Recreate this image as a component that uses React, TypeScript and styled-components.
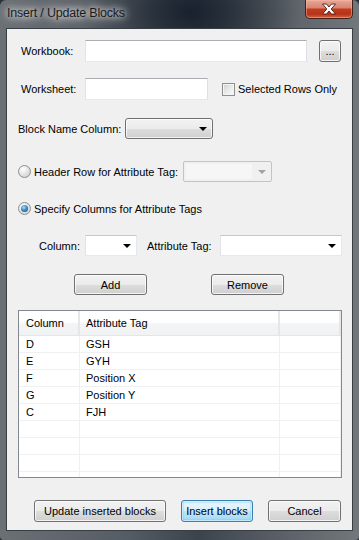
import styled, { createGlobalStyle, css } from 'styled-components';

const GlobalStyle = createGlobalStyle`
  html, body {
    margin: 0;
    padding: 0;
    background: #2b3138;
  }
  body {
    font-family: "Liberation Sans", Arial, sans-serif;
    font-size: 11px;
    color: #000;
  }
  * {
    box-sizing: border-box;
  }
`;

const Window = styled.div`
  width: 359px;
  height: 540px;
  display: flex;
  flex-direction: column;
  border-radius: 6px 6px 4px 4px;
  overflow: hidden;
  background:
    radial-gradient(ellipse 110px 70px at 190px 12px, rgba(22, 32, 44, 0.95), rgba(22, 32, 44, 0) 100%),
    linear-gradient(to right, #6b7075 0%, #565c63 35%, #3c434b 55%, #5d6268 80%, #72777c 100%);
`;

const TitleBar = styled.div`
  height: 28px;
  flex: none;
  display: flex;
  justify-content: space-between;
  align-items: flex-start;
  padding-left: 7px;
`;

const Title = styled.div`
  padding-top: 6px;
  font-size: 12.5px;
  letter-spacing: -0.2px;
  color: #1b1b1b;
  text-shadow:
    0 0 6px rgba(255, 255, 255, 0.9),
    0 0 10px rgba(255, 255, 255, 0.8),
    0 0 16px rgba(255, 255, 255, 0.6);
`;

const CloseButton = styled.div`
  width: 48px;
  height: 19px;
  margin-right: 6px;
  display: flex;
  align-items: center;
  justify-content: center;
  border: 1px solid #43201a;
  border-top: none;
  border-radius: 0 0 5px 5px;
  background: linear-gradient(to bottom, #e6a898 0%, #d98571 42%, #c43a1f 52%, #b5331a 78%, #d0643f 100%);
  box-shadow: inset 0 0 0 1px rgba(255, 190, 170, 0.45);
`;

const Client = styled.div`
  flex: 1;
  margin: 0 6px 9px 6px;
  border: 1px solid #383e45;
  background: #f0f0f0;
  display: flex;
  flex-direction: column;
  padding-top: 11px;
`;

const Row = styled.div<{ $top: number; $left?: number; $h?: number }>`
  display: flex;
  align-items: center;
  height: ${(p) => p.$h ?? 21}px;
  margin-top: ${(p) => p.$top}px;
  padding-left: ${(p) => p.$left ?? 0}px;
`;

const Label = styled.span<{ $w?: number; $ml?: number }>`
  flex: none;
  white-space: nowrap;
  ${(p) => p.$w !== undefined && css`width: ${p.$w}px;`}
  margin-left: ${(p) => p.$ml ?? 0}px;
`;

const TextBox = styled.div<{ $w: number }>`
  width: ${(p) => p.$w}px;
  height: 100%;
  flex: none;
  background: #fff;
  border: 1px solid;
  border-color: #abadb3 #dbdfe6 #e3e9ef #e2e3ea;
`;

const buttonFace = css`
  border: 1px solid #707070;
  border-radius: 3px;
  background: linear-gradient(to bottom, #f2f2f2 0%, #ebebeb 50%, #dddddd 51%, #cfcfcf 100%);
  box-shadow: inset 0 0 0 1px rgba(255, 255, 255, 0.75);
`;

const Button = styled.div<{ $w: number; $ml?: number; $focused?: boolean }>`
  flex: none;
  width: ${(p) => p.$w}px;
  height: 100%;
  margin-left: ${(p) => p.$ml ?? 0}px;
  display: flex;
  align-items: center;
  justify-content: center;
  white-space: nowrap;
  ${buttonFace}
  ${(p) =>
    p.$focused &&
    css`
      border-color: #3c7fb1;
      background: linear-gradient(to bottom, #eaf6fd 0%, #d9f0fc 50%, #bee6fd 51%, #a7d9f5 100%);
      box-shadow: inset 0 0 0 1px rgba(255, 255, 255, 0.6), inset 0 0 2px 1px #66c3f0;
    `}
`;

const Arrow = styled.span<{ $color?: string }>`
  width: 0;
  height: 0;
  border-left: 4px solid transparent;
  border-right: 4px solid transparent;
  border-top: 4px solid ${(p) => p.$color ?? '#000'};
`;

const Combo = styled.div<{ $w: number; $ml?: number; $variant: 'button' | 'white' | 'disabled' }>`
  flex: none;
  width: ${(p) => p.$w}px;
  height: 100%;
  margin-left: ${(p) => p.$ml ?? 0}px;
  display: flex;
  align-items: center;
  justify-content: flex-end;
  padding-right: 5px;
  ${(p) =>
    p.$variant === 'button'
      ? buttonFace
      : p.$variant === 'white'
      ? css`
          background: #fff;
          border: 1px solid;
          border-color: #c5c8ce #e3e9ef #e3e9ef #e2e3ea;
        `
      : css`
          border: 1px solid #c3c3c3;
          border-radius: 2px;
          background: #f0f0f0;
          padding: 2px 5px 2px 2px;
          justify-content: space-between;
        `}
`;

const DisabledField = styled.span`
  width: 66px;
  height: 100%;
  background: #f6f6f6;
`;

const CheckBox = styled.span<{ $ml?: number }>`
  flex: none;
  width: 13px;
  height: 13px;
  margin-left: ${(p) => p.$ml ?? 0}px;
  border: 1px solid #8e8f8f;
  background: linear-gradient(135deg, #cfcfcf 0%, #ececec 55%, #fbfbfb 100%);
  box-shadow: inset 0 0 0 1px #f4f4f4;
`;

const Radio = styled.span<{ $checked?: boolean }>`
  flex: none;
  position: relative;
  width: 13px;
  height: 13px;
  border-radius: 50%;
  border: 1px solid #8d8e8e;
  background: radial-gradient(circle at 35% 30%, #ffffff 0%, #e6e6e6 45%, #c8c8c8 100%);
  ${(p) =>
    p.$checked &&
    css`
      &::after {
        content: '';
        position: absolute;
        left: 2px;
        top: 2px;
        width: 7px;
        height: 7px;
        border-radius: 50%;
        background: radial-gradient(circle at 40% 35%, #a8dcf7 0%, #3e8fc6 45%, #0d3f6a 100%);
      }
    `}
`;

const ListBox = styled.div`
  margin: 15px 0 0 11px;
  width: 324px;
  height: 168px;
  flex: none;
  border: 1px solid #828790;
  background: #fff;
  overflow: hidden;
`;

const GRID = '61px 200px 1fr';

const HeaderRow = styled.div`
  display: grid;
  grid-template-columns: ${GRID};
  height: 25px;
  border-bottom: 1px solid #e5e5e5;
  background: linear-gradient(to bottom, #ffffff 0%, #ffffff 45%, #f3f4f6 55%, #f1f2f4 100%);
`;

const HeaderCell = styled.div<{ $pad: number }>`
  display: flex;
  align-items: center;
  padding-left: ${(p) => p.$pad}px;
  border-right: 2px solid #e6e7e9;
`;

const DataRow = styled.div`
  display: grid;
  grid-template-columns: ${GRID};
  height: 17px;
  border-bottom: 1px solid #f0f0f0;
`;

const Cell = styled.div<{ $pad: number }>`
  display: flex;
  align-items: center;
  padding-left: ${(p) => p.$pad}px;
  border-right: 1px solid #f0f0f0;
  white-space: nowrap;
`;

const rows: [string, string][] = [
  ['D', 'GSH'],
  ['E', 'GYH'],
  ['F', 'Position X'],
  ['G', 'Position Y'],
  ['C', 'FJH'],
  ['', ''],
  ['', ''],
  ['', ''],
  ['', ''],
];

function CloseGlyph() {
  return (
    <svg width="16" height="12" viewBox="0 0 16 12">
      <path
        d="M1.5 1 H5.5 L8 4 L10.5 1 H14.5 L10.2 6 L14.5 11 H10.5 L8 8 L5.5 11 H1.5 L5.8 6 Z"
        fill="#ffffff"
        stroke="#4a1e14"
        strokeWidth="0.9"
        strokeLinejoin="round"
      />
    </svg>
  );
}

export default function App() {
  return (
    <>
      <GlobalStyle />
      <Window>
        <TitleBar>
          <Title>Insert / Update Blocks</Title>
          <CloseButton>
            <CloseGlyph />
          </CloseButton>
        </TitleBar>
        <Client>
          <Row $top={0} $left={14} $h={22}>
            <Label $w={64}>Workbook:</Label>
            <TextBox $w={222} />
            <Button $w={22} $ml={12}>...</Button>
          </Row>

          <Row $top={16} $left={14} $h={22}>
            <Label $w={64}>Worksheet:</Label>
            <TextBox $w={123} />
            <CheckBox $ml={14} />
            <Label $ml={3}>Selected Rows Only</Label>
          </Row>

          <Row $top={18} $left={11}>
            <Label $w={107}>Block Name Column:</Label>
            <Combo $w={88} $variant="button">
              <Arrow />
            </Combo>
          </Row>

          <Row $top={22} $left={11}>
            <Radio />
            <Label $ml={3} $w={149}>Header Row for Attribute Tag:</Label>
            <Combo $w={89} $variant="disabled">
              <DisabledField />
              <Arrow $color="#a3a3a3" />
            </Combo>
          </Row>

          <Row $top={16} $left={11}>
            <Radio $checked />
            <Label $ml={3}>Specify Columns for Attribute Tags</Label>
          </Row>

          <Row $top={16} $left={32}>
            <Label $w={46}>Column:</Label>
            <Combo $w={52} $variant="white">
              <Arrow />
            </Combo>
            <Label $ml={10} $w={73}>Attribute Tag:</Label>
            <Combo $w={122} $variant="white">
              <Arrow />
            </Combo>
          </Row>

          <Row $top={18} $left={67}>
            <Button $w={73}>Add</Button>
            <Button $w={73} $ml={64}>Remove</Button>
          </Row>

          <ListBox>
            <HeaderRow>
              <HeaderCell $pad={7}>Column</HeaderCell>
              <HeaderCell $pad={6}>Attribute Tag</HeaderCell>
              <HeaderCell $pad={6} />
            </HeaderRow>
            {rows.map(([col, tag], i) => (
              <DataRow key={i}>
                <Cell $pad={7}>{col}</Cell>
                <Cell $pad={6}>{tag}</Cell>
                <Cell $pad={6} />
              </DataRow>
            ))}
          </ListBox>

          <Row $top={22} $left={27} $h={22}>
            <Button $w={132}>Update inserted blocks</Button>
            <Button $w={72} $ml={15} $focused>Insert blocks</Button>
            <Button $w={73} $ml={15}>Cancel</Button>
          </Row>
        </Client>
      </Window>
    </>
  );
}
